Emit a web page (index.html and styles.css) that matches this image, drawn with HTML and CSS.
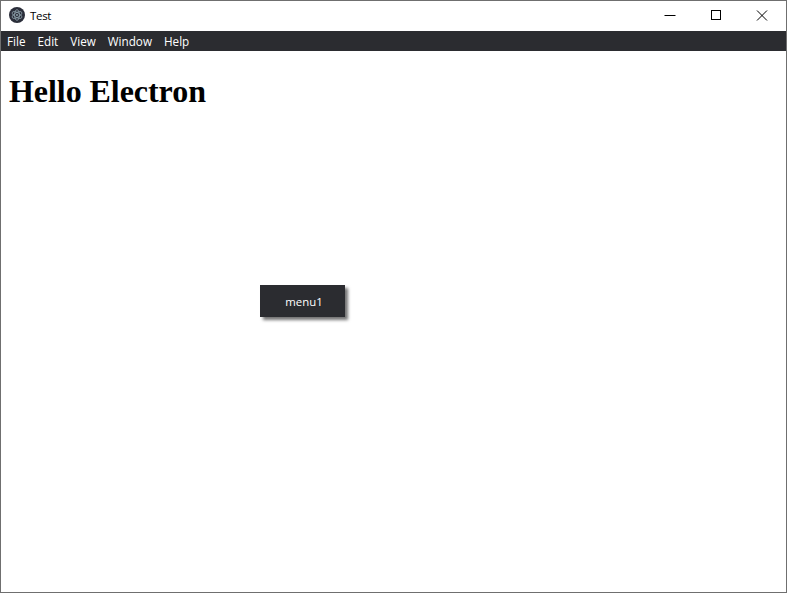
FILE: index.html
```html
<!DOCTYPE html>
<html lang="en">
<head>
<meta charset="utf-8">
<title>Test</title>
<link rel="stylesheet" href="styles.css">
</head>
<body>
<div class="window">
  <header class="titlebar">
    <svg class="app-icon" width="16" height="16" viewBox="0 0 16 16" aria-hidden="true">
      <circle cx="8" cy="8" r="8" fill="#2b2e3a"/>
      <g fill="none" stroke="#8fa3ad" stroke-width=".8">
        <ellipse cx="8" cy="8" rx="5.4" ry="2.4" transform="rotate(30 8 8)"/>
        <ellipse cx="8" cy="8" rx="5.4" ry="2.4" transform="rotate(90 8 8)"/>
        <ellipse cx="8" cy="8" rx="5.4" ry="2.4" transform="rotate(150 8 8)"/>
      </g>
      <circle cx="8" cy="8" r="1" fill="#8fa3ad"/>
    </svg>
    <span class="title">Test</span>
    <div class="controls">
      <span class="control">
        <svg width="12" height="12" viewBox="0 0 12 12"><path d="M0.5 6.5H11.5" stroke="#000" fill="none"/></svg>
      </span>
      <span class="control">
        <svg width="12" height="12" viewBox="0 0 12 12"><rect x="1.5" y="1.5" width="9" height="9" stroke="#000" fill="none"/></svg>
      </span>
      <span class="control">
        <svg width="12" height="12" viewBox="0 0 12 12"><path d="M1 1.5L11 11.5M11 1.5L1 11.5" stroke="#000" fill="none"/></svg>
      </span>
    </div>
  </header>
  <nav class="menubar">
    <span class="menu-item">File</span>
    <span class="menu-item">Edit</span>
    <span class="menu-item">View</span>
    <span class="menu-item">Window</span>
    <span class="menu-item">Help</span>
  </nav>
  <main class="content">
    <h1 class="heading">Hello Electron</h1>
  </main>
  <div class="context-menu">menu1</div>
</div>
</body>
</html>
```
FILE: styles.css
```css
* {
  box-sizing: border-box;
}

html,
body {
  margin: 0;
  height: 100%;
  background: #fff;
  overflow: hidden;
}

.window {
  position: relative;
  display: flex;
  flex-direction: column;
  width: 787px;
  height: 593px;
  border: 1px solid #6f6f6f;
  font-family: "Open Sans", "Noto Sans", sans-serif;
}

.titlebar {
  display: flex;
  align-items: center;
  height: 30px;
  padding: 0 0 2px 8px;
  background: #fff;
  color: #000;
}

.app-icon {
  flex: none;
}

.title {
  margin-left: 5px;
  font-size: 11.5px;
  letter-spacing: -0.3px;
}

.controls {
  display: flex;
  margin-left: auto;
  height: 100%;
  padding-right: 1px;
}

.control {
  display: flex;
  align-items: center;
  justify-content: center;
  width: 46px;
  height: 100%;
}

.menubar {
  display: flex;
  align-items: center;
  gap: 12px;
  height: 20px;
  padding: 0 0 1px 6px;
  background: #2b2c30;
  color: #fff;
  font-size: 11.7px;
}

.content {
  flex: 1;
  padding: 0 8px;
}

.heading {
  margin: 22px 0 0;
  font-family: "Liberation Serif", serif;
  font-size: 32px;
  font-weight: bold;
  line-height: 37px;
  letter-spacing: -0.05px;
  color: #000;
}

.context-menu {
  position: absolute;
  left: 259px;
  top: 284px;
  width: 85px;
  height: 32px;
  display: flex;
  align-items: center;
  justify-content: center;
  padding-left: 3px;
  background: #2b2c30;
  color: #fff;
  font-size: 11.4px;
  box-shadow: 3px 3px 3px rgba(0, 0, 0, 0.55);
}
```
